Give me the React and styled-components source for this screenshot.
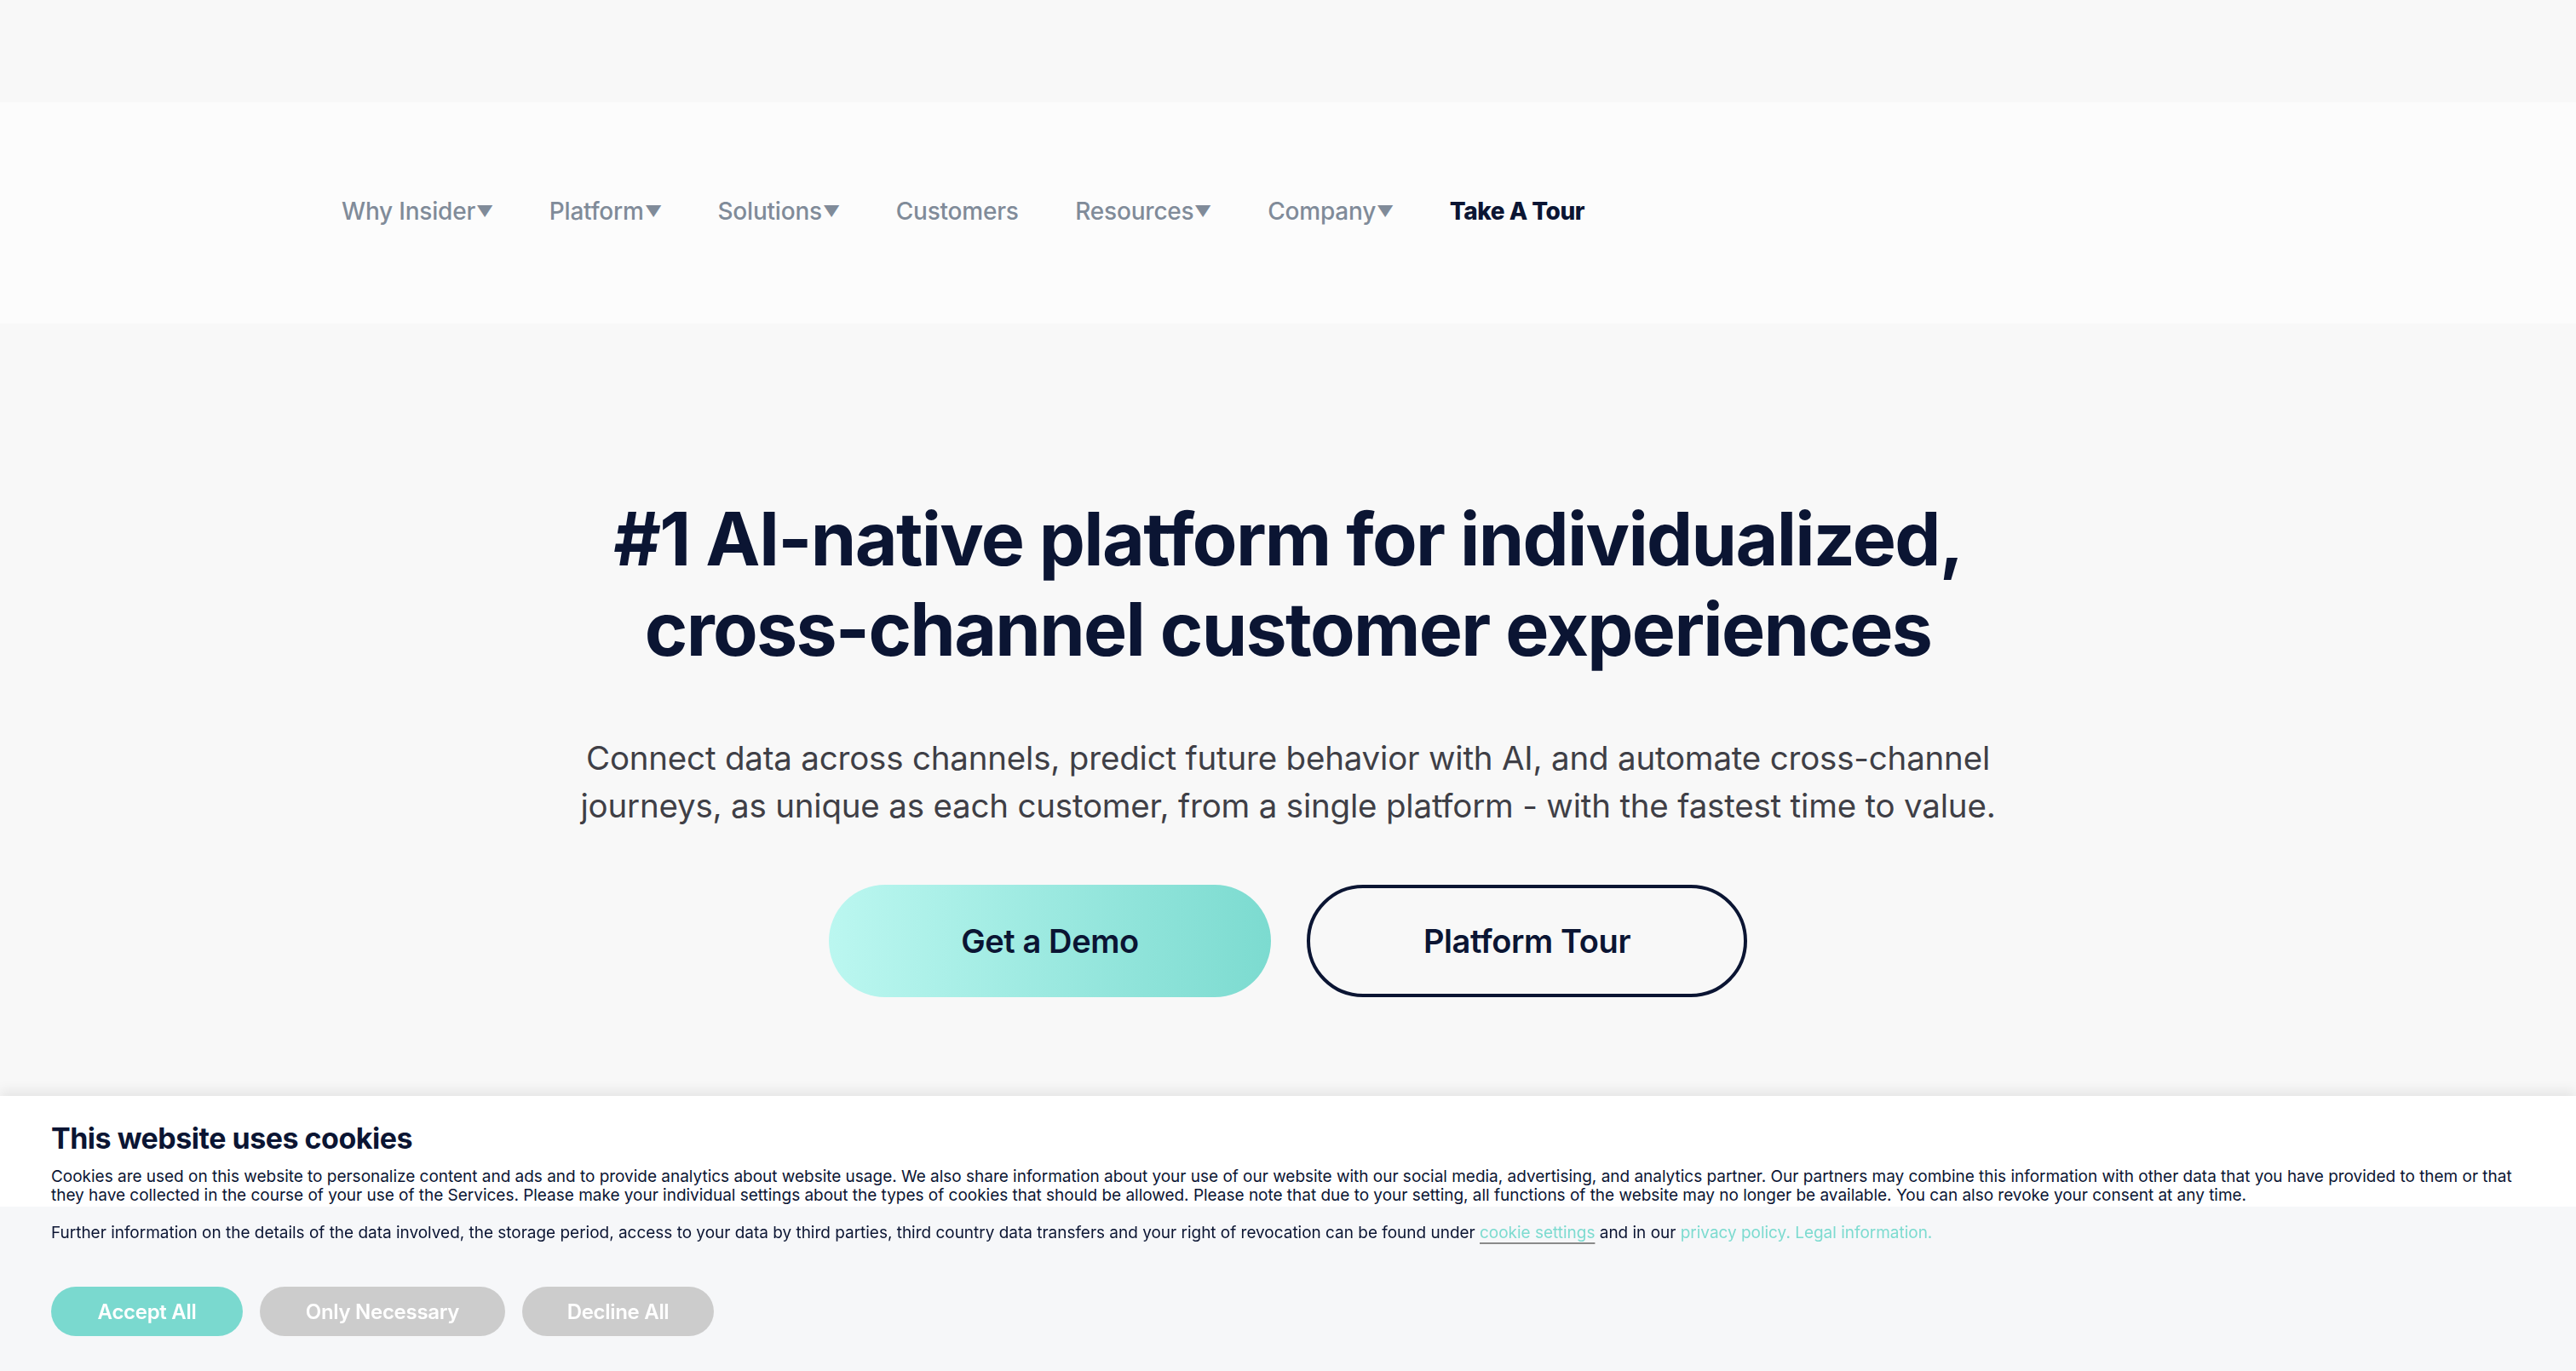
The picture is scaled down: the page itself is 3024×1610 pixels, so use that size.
import React from "react";
import styled, { createGlobalStyle } from "styled-components";

const GlobalStyle = createGlobalStyle`
  html, body {
    margin: 0;
    padding: 0;
    background: #f8f8f8;
    font-family: Inter, "Noto Sans", Arial, sans-serif;
    color: #0b1533;
  }
  * { box-sizing: border-box; }
`;

const navItems = [
  { label: "Why Insider", menu: true },
  { label: "Platform", menu: true },
  { label: "Solutions", menu: true },
  { label: "Customers" },
  { label: "Resources", menu: true },
  { label: "Company", menu: true },
  { label: "Take A Tour", strong: true },
];

const App = () => {
  return (
    <>
      <GlobalStyle />
      <Page>
        <TopStrip />
        <Header>
          <Nav>
            {navItems.map((item) => (
              <NavLink key={item.label} $strong={item.strong}>
                {item.label}
                {item.menu && <Caret>▼</Caret>}
              </NavLink>
            ))}
          </Nav>
        </Header>
        <Hero>
          <Title>
            #1 AI-native platform for individualized,
            <br />
            cross-channel customer experiences
          </Title>
          <Lead>
            Connect data across channels, predict future behavior with AI, and
            automate cross-channel
            <br />
            journeys, as unique as each customer, from a single platform - with
            the fastest time to value.
          </Lead>
          <Actions>
            <DemoButton>Get a Demo</DemoButton>
            <TourButton>Platform Tour</TourButton>
          </Actions>
        </Hero>
      </Page>

      <CookieBanner>
        <CookieTop>
          <CookieTitle>This website uses cookies</CookieTitle>
          <CookieText>
            Cookies are used on this website to personalize content and ads and
            to provide analytics about website usage. We also share information
            about your use of our website with our social media, advertising,
            and analytics partner. Our partners may combine this information
            with other data that you have provided to them or that they have
            collected in the course of your use of the Services. Please make
            your individual settings about the types of cookies that should be
            allowed. Please note that due to your setting, all functions of the
            website may no longer be available. You can also revoke your
            consent at any time.
          </CookieText>
        </CookieTop>
        <CookieBottom>
          <CookieText>
            Further information on the details of the data involved, the
            storage period, access to your data by third parties, third country
            data transfers and your right of revocation can be found under{" "}
            <CookieLink $underline>cookie settings</CookieLink> and in our{" "}
            <CookieLink>privacy policy.</CookieLink>{" "}
            <CookieLink>Legal information.</CookieLink>
          </CookieText>
          <CookieButtons>
            <CookieButton $primary>Accept All</CookieButton>
            <CookieButton $wide>Only Necessary</CookieButton>
            <CookieButton>Decline All</CookieButton>
          </CookieButtons>
        </CookieBottom>
      </CookieBanner>
    </>
  );
};

const Page = styled.div`
  min-height: 1610px;
  display: flex;
  flex-direction: column;
`;

const TopStrip = styled.div`
  height: 120px;
  background: #f8f8f8;
`;

const Header = styled.header`
  height: 260px;
  background: #fcfcfc;
  display: flex;
  align-items: center;
  padding-left: 401px;
`;

const Nav = styled.nav`
  display: flex;
  align-items: center;
  gap: 66.5px;
  padding-bottom: 4px;
`;

const NavLink = styled.a`
  font-size: 28px;
  font-weight: ${(p) => (p.$strong ? 800 : 500)};
  color: ${(p) => (p.$strong ? "#0b1533" : "#808b99")};
  letter-spacing: ${(p) => (p.$strong ? "-0.5px" : "-0.2px")};
  display: flex;
  align-items: center;
  cursor: pointer;
`;

const Caret = styled.span`
  font-size: 18px;
  margin-left: 2px;
  transform: scaleX(1.1);
`;

const Hero = styled.main`
  flex: 1;
  background: #f8f8f8;
  display: flex;
  flex-direction: column;
  align-items: center;
  padding-top: 200px;
`;

const Title = styled.h1`
  margin: 0;
  text-align: center;
  font-size: 86px;
  line-height: 106px;
  font-weight: 700;
  letter-spacing: -1.7px;
  color: #0b1533;
`;

const Lead = styled.p`
  margin: 70px 0 0;
  text-align: center;
  font-size: 38.5px;
  line-height: 56px;
  font-weight: 400;
  color: #3f3f46;
  letter-spacing: -0.2px;
`;

const Actions = styled.div`
  display: flex;
  gap: 42px;
  margin-top: 65px;
`;

const PillButton = styled.button`
  height: 132px;
  width: 519px;
  border-radius: 66px;
  font-family: inherit;
  font-size: 38px;
  font-weight: 600;
  color: #0b1533;
  letter-spacing: -0.4px;
  cursor: pointer;
`;

const DemoButton = styled(PillButton)`
  border: none;
  background: linear-gradient(90deg, #bbf7f0 0%, #7cdbd0 100%);
`;

const TourButton = styled(PillButton)`
  width: 517px;
  background: transparent;
  border: 4px solid #0b1533;
`;

const CookieBanner = styled.section`
  position: fixed;
  left: 0;
  right: 0;
  bottom: 0;
  height: 323px;
  background: #f6f7f9;
  box-shadow: 0 -6px 14px rgba(0, 0, 0, 0.08);
  display: flex;
  flex-direction: column;
`;

const CookieTop = styled.div`
  background: #ffffff;
  height: 130px;
  overflow: hidden;
  padding: 30px 60px 0;
`;

const CookieTitle = styled.h2`
  margin: 0 0 14px;
  font-size: 34px;
  line-height: 40px;
  font-weight: 700;
  letter-spacing: -0.5px;
  color: #0b1533;
`;

const CookieText = styled.p`
  margin: 0;
  font-size: 19px;
  line-height: 22px;
  color: #0b1533;
  letter-spacing: -0.02px;
`;

const CookieBottom = styled.div`
  padding: 20px 60px 0;
  display: flex;
  flex-direction: column;
`;

const CookieLink = styled.a`
  color: #7ddbd0;
  cursor: pointer;
  text-decoration: ${(p) => (p.$underline ? "underline" : "none")};
  text-decoration-color: #8a8a8a;
  text-decoration-thickness: 2px;
  text-underline-offset: 5px;
`;

const CookieButtons = styled.div`
  display: flex;
  gap: 20px;
  margin-top: 52px;
`;

const CookieButton = styled.button`
  height: 58px;
  width: ${(p) => (p.$wide ? "288px" : "225px")};
  border: none;
  border-radius: 29px;
  background: ${(p) => (p.$primary ? "#7ad9cf" : "#cccccc")};
  color: #ffffff;
  font-family: inherit;
  font-size: 24px;
  font-weight: 600;
  letter-spacing: -0.3px;
  cursor: pointer;
`;

export default App;
